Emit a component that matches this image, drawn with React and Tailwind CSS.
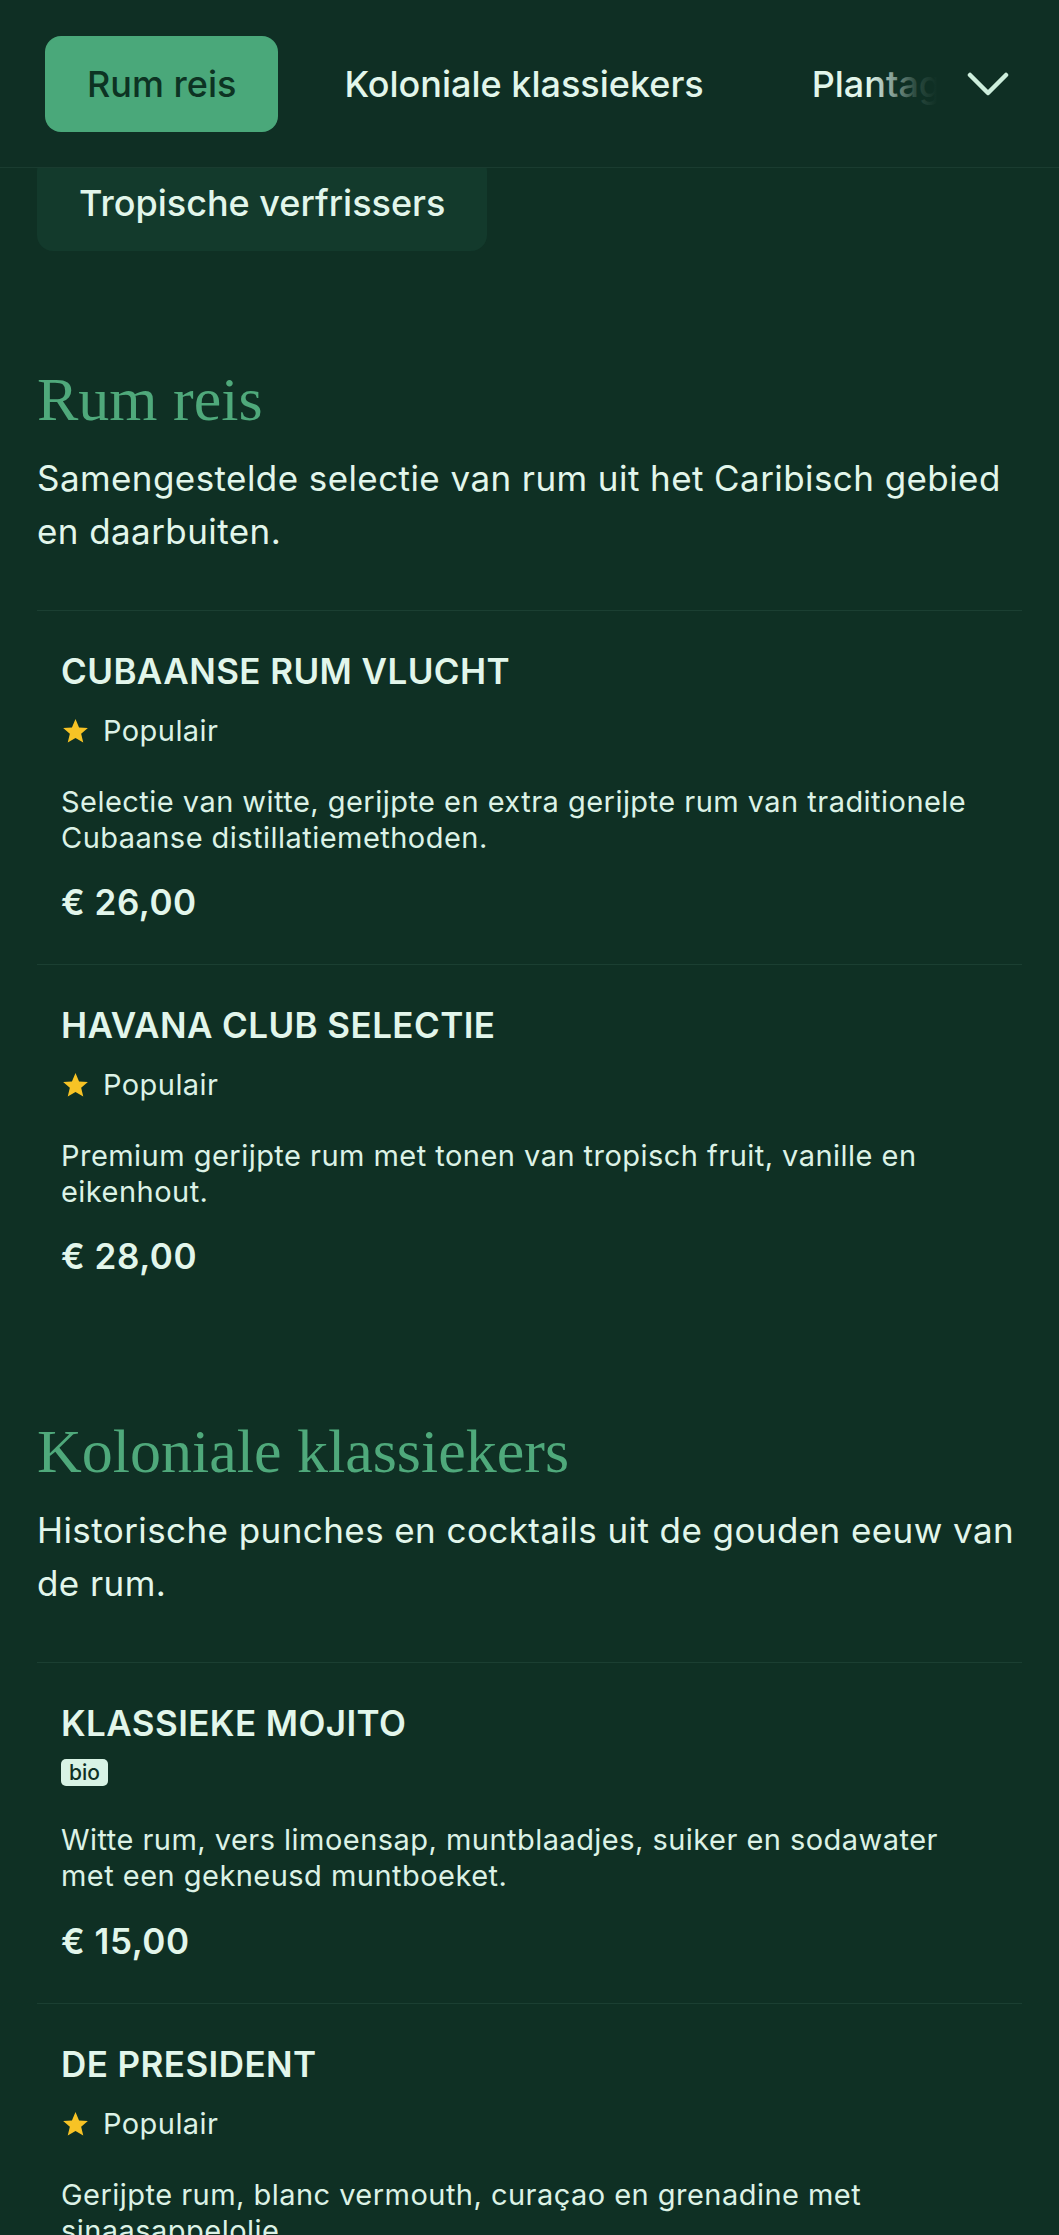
import React from "react";

const font = { fontFamily: "Inter, 'Noto Sans', sans-serif" };

function Star() {
  return (
    <svg width="29" height="28" viewBox="0 0 24 24" className="shrink-0">
      <path
        d="M12 1.8l3.05 7.1 7.55.6-5.75 4.95 1.8 7.45L12 17.9l-6.65 4 1.8-7.45L1.4 9.5l7.55-.6z"
        fill="#f7c325"
      />
    </svg>
  );
}

function Popular() {
  return (
    <div className="mt-[22px] flex items-center gap-[13px] h-[36px]">
      <Star />
      <span className="text-[29px] leading-[36px] tracking-[0.015em] text-[#dcf2e6]">Populair</span>
    </div>
  );
}

function Bio() {
  return (
    <div className="mt-[16px] flex items-center">
      <span className="inline-flex h-[27px] w-[47px] items-center justify-center rounded-[5px] bg-[#d8f3e5] text-[21px] font-medium leading-none text-[#0f3024]">
        bio
      </span>
    </div>
  );
}

function Item({ title, tag, desc, price }) {
  return (
    <div className="border-t border-[#1b3f32] px-[24px] pt-[40px] pb-[42px]">
      <h3 className="text-[35px] leading-[40px] font-semibold text-[#e2f6eb] tracking-[0.012em]">{title}</h3>
      {tag === "pop" ? <Popular /> : <Bio />}
      <p className={(tag === "pop" ? "mt-[35px]" : "mt-[36px]") + " text-[29px] leading-[36px] tracking-[0.016em] text-[#dcf2e6] pr-[30px]"}>
        {desc}
      </p>
      <div className={(tag === "pop" ? "mt-[26px]" : "mt-[27px]") + " text-[35px] leading-[40px] font-semibold tracking-[0.015em] text-[#e2f6eb]"}>
        {price}
      </div>
    </div>
  );
}

function Section({ title, desc, items, mt }) {
  return (
    <section className={mt}>
      <h2
        className="text-[62px] leading-[74px] text-[#4fa97b]"
        style={{ fontFamily: "'Liberation Serif', 'DejaVu Serif', serif" }}
      >
        {title}
      </h2>
      <p className="mt-[16px] text-[35px] leading-[53px] tracking-[0.012em] text-[#e2f6eb]">{desc}</p>
      <div className="mt-[52px]">
        {items.map((it, i) => (
          <Item key={i} {...it} />
        ))}
      </div>
    </section>
  );
}

export default function App() {
  return (
    <div className="min-h-screen w-full bg-[#0f3024] overflow-hidden" style={font}>
      <header className="relative z-10 h-[168px] border-b border-[#1a3c30] bg-[#0f2f24]">
        <div className="flex h-full items-center gap-[24px] pl-[45px] whitespace-nowrap overflow-hidden">
          <button className="h-[96px] shrink-0 rounded-[16px] bg-[#4aa87a] px-[42px] text-[36px] font-medium text-[#0d3323]">
            Rum reis
          </button>
          <button className="h-[96px] shrink-0 px-[42px] text-[36px] font-medium text-[#e2f6eb]">
            Koloniale klassiekers
          </button>
          <button className="h-[96px] shrink-0 px-[42px] text-[36px] font-medium text-[#e2f6eb]">
            Plantage rum
          </button>
        </div>
        <div className="pointer-events-none absolute right-0 top-0 flex h-full w-[190px] items-center justify-end pr-[50px] bg-[linear-gradient(to_right,rgba(15,47,36,0)_0%,rgba(15,47,36,0.85)_24%,#0f2f24_36%)]">
          <svg width="42" height="24" viewBox="0 0 42 24">
            <polyline
              points="3,3 21,21 39,3"
              fill="none"
              stroke="#cdeedc"
              strokeWidth="4.5"
              strokeLinecap="round"
              strokeLinejoin="round"
            />
          </svg>
        </div>
      </header>

      <div className="px-[37px]">
        <div className="-mt-[13px] flex">
          <div className="flex h-[96px] items-center rounded-[16px] bg-[#133a2c] px-[42px] text-[36px] font-medium text-[#e2f6eb]">
            Tropische verfrissers
          </div>
        </div>

        <Section
          mt="mt-[111px]"
          title="Rum reis"
          desc="Samengestelde selectie van rum uit het Caribisch gebied en daarbuiten."
          items={[
            {
              title: "CUBAANSE RUM VLUCHT",
              tag: "pop",
              desc: "Selectie van witte, gerijpte en extra gerijpte rum van traditionele Cubaanse distillatiemethoden.",
              price: "€ 26,00",
            },
            {
              title: "HAVANA CLUB SELECTIE",
              tag: "pop",
              desc: "Premium gerijpte rum met tonen van tropisch fruit, vanille en eikenhout.",
              price: "€ 28,00",
            },
          ]}
        />

        <Section
          mt="mt-[96px]"
          title="Koloniale klassiekers"
          desc="Historische punches en cocktails uit de gouden eeuw van de rum."
          items={[
            {
              title: "KLASSIEKE MOJITO",
              tag: "bio",
              desc: "Witte rum, vers limoensap, muntblaadjes, suiker en sodawater met een gekneusd muntboeket.",
              price: "€ 15,00",
            },
            {
              title: "DE PRESIDENT",
              tag: "pop",
              desc: "Gerijpte rum, blanc vermouth, curaçao en grenadine met sinaasappelolie.",
              price: "€ 18,00",
            },
          ]}
        />
      </div>
    </div>
  );
}
